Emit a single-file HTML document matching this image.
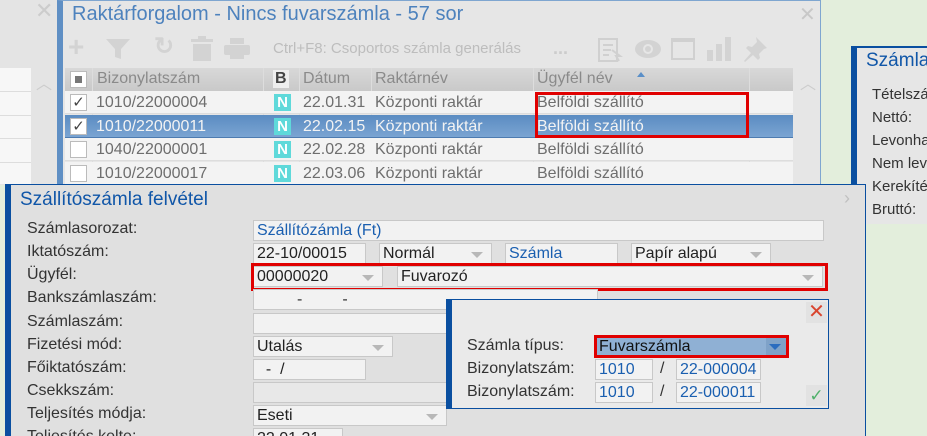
<!DOCTYPE html><html><head><meta charset="utf-8"><style>
*{box-sizing:border-box;margin:0;padding:0}
html{width:927px;height:436px;overflow:hidden}
body{width:927px;height:436px;overflow:hidden;position:relative;background:#e3eedc;font-family:"Liberation Sans",sans-serif;font-size:15px;color:#333}
.a{position:absolute;white-space:nowrap}
.gt{color:#8a8a8a}
.inp{position:absolute;background:#f2f2f2;border:1px solid #c8c8c8;height:21px;padding:1px 3px;font-size:16px;color:#222;white-space:nowrap;line-height:18px}
.dd::after{content:"";position:absolute;right:8px;top:8px;border-left:6px solid transparent;border-right:6px solid transparent;border-top:6px solid #b8b8b8}
.rb{position:absolute;border:3px solid #e00000}
.row{position:absolute;left:65px;width:728px;height:23px;background:#f3f3f3;border-bottom:1px solid #ddd}
.cell{position:absolute;top:3px;font-size:16px;color:#6e6e6e}
.cb{position:absolute;left:5px;top:3px;width:17px;height:17px;border:1px solid #bbb;background:#fff;font-size:15px;line-height:15px;text-align:center;color:#444}
.n{position:absolute;left:209px;top:3px;width:17px;height:17px;background:#5fd9da;color:#fff;font-weight:bold;font-size:15px;text-align:center;line-height:17px}
.lbl{position:absolute;left:27px;font-size:16px;color:#333}
</style></head><body>
<div class="a" style="left:0;top:0;width:57px;height:185px;background:#e4e4e4"></div>
<div class="a" style="left:0;top:68px;width:31px;height:116px;background:#f7f7f7"></div>
<div class="a" style="left:0;top:91px;width:31px;height:1px;background:#ddd"></div>
<div class="a" style="left:0;top:115px;width:31px;height:1px;background:#ddd"></div>
<div class="a" style="left:0;top:138px;width:31px;height:1px;background:#ddd"></div>
<div class="a" style="left:0;top:162px;width:31px;height:1px;background:#ddd"></div>
<div class="a" style="left:35px;top:-2px;font-size:22px;color:#ccc">✕</div>
<div class="a" style="left:36px;top:70px;font-size:16px;color:#ccc">︿</div>
<div class="a" style="left:57px;top:0;width:764px;height:186px;background:#e6e6e6;border:1px solid #7fa6d0;border-left:6px solid #5f8fc4"></div>
<div class="a" style="left:72px;top:3px;font-size:20px;color:#4d82bd">Raktárforgalom - Nincs fuvarszámla - 57 sor</div>
<div class="a" style="left:799px;top:2px;font-size:20px;color:#c8c8c8">✕</div>
<div class="a" style="left:68px;top:33px;font-size:28px;color:#d3d3d3;font-weight:bold;line-height:28px">+</div>
<svg class="a" style="left:105px;top:38px" width="26" height="22"><path d="M1 1h24l-9 10v10l-6-2v-8z" fill="#d3d3d3"/></svg>
<div class="a" style="left:154px;top:32px;font-size:24px;color:#d3d3d3;font-weight:bold">↻</div>
<svg class="a" style="left:189px;top:36px" width="26" height="26"><rect x="2" y="3" width="22" height="3" fill="#d3d3d3"/><rect x="9" y="0" width="8" height="4" fill="#d3d3d3"/><rect x="4" y="8" width="18" height="17" fill="#d3d3d3"/></svg>
<svg class="a" style="left:224px;top:38px" width="26" height="22"><rect x="6" y="0" width="14" height="6" fill="#d3d3d3"/><rect x="0" y="7" width="26" height="10" rx="2" fill="#d3d3d3"/><rect x="6" y="15" width="14" height="6" fill="#d3d3d3"/></svg>
<div class="a" style="left:273px;top:40px;font-size:15px;color:#bdbdbd">Ctrl+F8: Csoportos számla generálás</div>
<div class="a" style="left:553px;top:38px;font-size:18px;color:#ccc;font-weight:bold">...</div>
<svg class="a" style="left:598px;top:38px" width="26" height="24"><rect x="1" y="1" width="18" height="22" fill="none" stroke="#d0d0d0" stroke-width="2"/><path d="M5 7h10M5 12h8M5 17h6M14 12l8 6-4 0 3 5" stroke="#d0d0d0" stroke-width="2" fill="none"/></svg>
<svg class="a" style="left:634px;top:39px" width="28" height="20"><ellipse cx="14" cy="10" rx="13" ry="9" fill="#d3d3d3"/><circle cx="14" cy="10" r="5" fill="#e6e6e6"/><circle cx="14" cy="10" r="3" fill="#d3d3d3"/></svg>
<div class="a" style="left:671px;top:38px;width:24px;height:22px;border:2px solid #d0d0d0;border-top-width:4px"></div>
<svg class="a" style="left:706px;top:36px" width="26" height="26"><rect x="1" y="14" width="6" height="11" fill="#d3d3d3"/><rect x="10" y="8" width="6" height="17" fill="#d3d3d3"/><rect x="19" y="1" width="6" height="24" fill="#d3d3d3"/></svg>
<svg class="a" style="left:742px;top:36px" width="26" height="26"><path d="M14 1l11 11-3 1-5 5 1 4-2 2-5-5-8 7-1-1 7-8-5-5 2-2 4 1 5-5z" fill="#d3d3d3"/></svg>
<div class="a" style="left:65px;top:68px;width:728px;height:23px;background:linear-gradient(#d8d8d8,#c9c9c9)"></div>
<div class="a" style="left:70px;top:71px;width:17px;height:17px;background:#fff;border:1px solid #bbb"><div style="margin:4px;width:7px;height:7px;background:#777"></div></div>
<div class="a" style="left:92px;top:68px;width:1px;height:116px;background:#ddd"></div>
<div class="a" style="left:263px;top:68px;width:1px;height:116px;background:#ddd"></div>
<div class="a" style="left:299px;top:68px;width:1px;height:116px;background:#ddd"></div>
<div class="a" style="left:371px;top:68px;width:1px;height:116px;background:#ddd"></div>
<div class="a" style="left:533px;top:68px;width:1px;height:116px;background:#ddd"></div>
<div class="a" style="left:749px;top:68px;width:1px;height:116px;background:#ddd"></div>
<div class="a gt" style="left:97px;top:70px;font-size:16px">Bizonylatszám</div>
<div class="a" style="left:273px;top:70px;font-size:16px;font-weight:bold;color:#444;background:#eee;padding:0 2px">B</div>
<div class="a gt" style="left:303px;top:70px;font-size:16px">Dátum</div>
<div class="a gt" style="left:375px;top:70px;font-size:16px">Raktárnév</div>
<div class="a gt" style="left:537px;top:70px;font-size:16px">Ügyfél név</div>
<div class="a" style="left:637px;top:72px;border-left:4px solid transparent;border-right:4px solid transparent;border-bottom:5px solid #5a8fc8"></div>
<div class="a" style="left:800px;top:70px;font-size:16px;color:#ccc">︿</div>
<div class="row" style="top:91px"><div class="cb">✓</div><div class="cell" style="left:31px">1010/22000004</div><div class="n">N</div><div class="cell" style="left:238px">22.01.31</div><div class="cell" style="left:310px">Központi raktár</div><div class="cell" style="left:472px">Belföldi szállító</div></div>
<div class="row" style="top:115px;background:linear-gradient(#5b8cc2,#7aa4d2);border-bottom:1px solid #4d7bb0"><div class="cb">✓</div><div class="cell" style="left:31px;color:#f3f3f3">1010/22000011</div><div class="n">N</div><div class="cell" style="left:238px;color:#f3f3f3">22.02.15</div><div class="cell" style="left:310px;color:#f3f3f3">Központi raktár</div><div class="cell" style="left:472px;color:#f3f3f3">Belföldi szállító</div></div>
<div class="row" style="top:138px"><div class="cb"></div><div class="cell" style="left:31px">1040/22000001</div><div class="n">N</div><div class="cell" style="left:238px">22.02.28</div><div class="cell" style="left:310px">Központi raktár</div><div class="cell" style="left:472px">Belföldi szállító</div></div>
<div class="row" style="top:162px"><div class="cb"></div><div class="cell" style="left:31px">1010/22000017</div><div class="n">N</div><div class="cell" style="left:238px">22.03.06</div><div class="cell" style="left:310px">Központi raktár</div><div class="cell" style="left:472px">Belföldi szállító</div></div>
<div class="rb" style="left:535px;top:92px;width:214px;height:46px"></div>
<div class="a" style="left:851px;top:46px;width:80px;height:178px;background:#e6e6e6;border-top:2px solid #0a4fa0;border-left:6px solid #0a4fa0"></div>
<div class="a" style="left:866px;top:50px;font-size:19px;color:#1056a8">Számla</div>
<div class="a" style="left:872px;top:83px;font-size:15px;line-height:23px;color:#333">Tételszám<br>Nettó:<br>Levonható<br>Nem levonh<br>Kerekítés<br>Bruttó:</div>
<div class="a" style="left:5px;top:184px;width:861px;height:260px;background:#e0e0e0;border:1px solid #0a4fa0;border-left:6px solid #0a4fa0"></div>
<div class="a" style="left:20px;top:189px;font-size:19px;color:#1056a8">Szállítószámla felvétel</div>
<div class="a" style="left:844px;top:188px;font-size:18px;color:#c0c0c0">›</div>
<div class="lbl" style="top:220px">Számlasorozat:</div>
<div class="lbl" style="top:243px">Iktatószám:</div>
<div class="lbl" style="top:266px">Ügyfél:</div>
<div class="lbl" style="top:289px">Bankszámlaszám:</div>
<div class="lbl" style="top:313px">Számlaszám:</div>
<div class="lbl" style="top:336px">Fizetési mód:</div>
<div class="lbl" style="top:359px">Főiktatószám:</div>
<div class="lbl" style="top:382px">Csekkszám:</div>
<div class="lbl" style="top:405px">Teljesítés módja:</div>
<div class="lbl" style="top:428px">Teljesítés kelte:</div>
<div class="inp" style="left:253px;top:220px;width:571px;color:#1a5fb0">Szállítózámla (Ft)</div>
<div class="inp" style="left:253px;top:243px;width:113px">22-10/00015</div>
<div class="inp dd" style="left:379px;top:243px;width:113px">Normál</div>
<div class="inp" style="left:505px;top:243px;width:113px;color:#1a5fb0">Számla</div>
<div class="inp dd" style="left:631px;top:243px;width:140px">Papír alapú</div>
<div class="inp dd" style="left:253px;top:266px;width:130px;padding-right:30px">00000020</div>
<div class="inp dd" style="left:397px;top:266px;width:426px">Fuvarozó</div>
<div class="rb" style="left:251px;top:263px;width:577px;height:28px"></div>
<div class="inp" style="left:253px;top:289px;width:345px;color:#333">&nbsp;&nbsp;&nbsp;&nbsp;&nbsp;&nbsp;&nbsp;&nbsp;&nbsp;-&nbsp;&nbsp;&nbsp;&nbsp;&nbsp;&nbsp;&nbsp;&nbsp;&nbsp;-</div>
<div class="inp" style="left:253px;top:313px;width:200px"></div>
<div class="inp dd" style="left:253px;top:336px;width:140px">Utalás</div>
<div class="inp" style="left:253px;top:359px;width:113px">&nbsp;&nbsp;-&nbsp;&nbsp;/</div>
<div class="inp" style="left:253px;top:382px;width:200px;background:#e8e8e8"></div>
<div class="inp dd" style="left:253px;top:405px;width:194px">Eseti</div>
<div class="inp dd" style="left:253px;top:428px;width:90px">22.01.31</div>
<div class="a" style="left:446px;top:299px;width:383px;height:110px;background:#eaeaea;border:1px solid #0a4fa0;border-left:6px solid #0a4fa0"></div>
<div class="a" style="left:806px;top:302px;width:21px;height:21px;background:#e2e2e2;color:#d9452f;font-size:20px;line-height:21px;text-align:center">✕</div>
<div class="a" style="left:467px;top:337px;font-size:16px;color:#333">Számla típus:</div>
<div class="a" style="left:467px;top:360px;font-size:16px;color:#333">Bizonylatszám:</div>
<div class="a" style="left:467px;top:383px;font-size:16px;color:#333">Bizonylatszám:</div>
<div class="a" style="left:594px;top:335px;width:195px;height:23px;border:3px solid #e00000;background:#8fb0d4"><span style="position:absolute;left:2px;top:0;font-size:16px;color:#111">Fuvarszámla</span><div style="position:absolute;right:0;top:0;width:20px;height:17px;background:#7fa2c8"></div><div style="position:absolute;right:5px;top:6px;border-left:6px solid transparent;border-right:6px solid transparent;border-top:6px solid #2a6cbf"></div></div>
<div class="inp" style="left:595px;top:359px;width:58px;color:#1a5fb0">1010</div>
<div class="a" style="left:660px;top:360px;font-size:16px">/</div>
<div class="inp" style="left:676px;top:359px;width:85px;color:#1a5fb0">22-000004</div>
<div class="inp" style="left:595px;top:382px;width:58px;color:#1a5fb0">1010</div>
<div class="a" style="left:660px;top:383px;font-size:16px">/</div>
<div class="inp" style="left:676px;top:382px;width:85px;color:#1a5fb0">22-000011</div>
<div class="a" style="left:806px;top:385px;width:21px;height:21px;background:#e2e2e2;color:#4fb06a;font-size:17px;line-height:21px;text-align:center">✓</div>
</body></html>
